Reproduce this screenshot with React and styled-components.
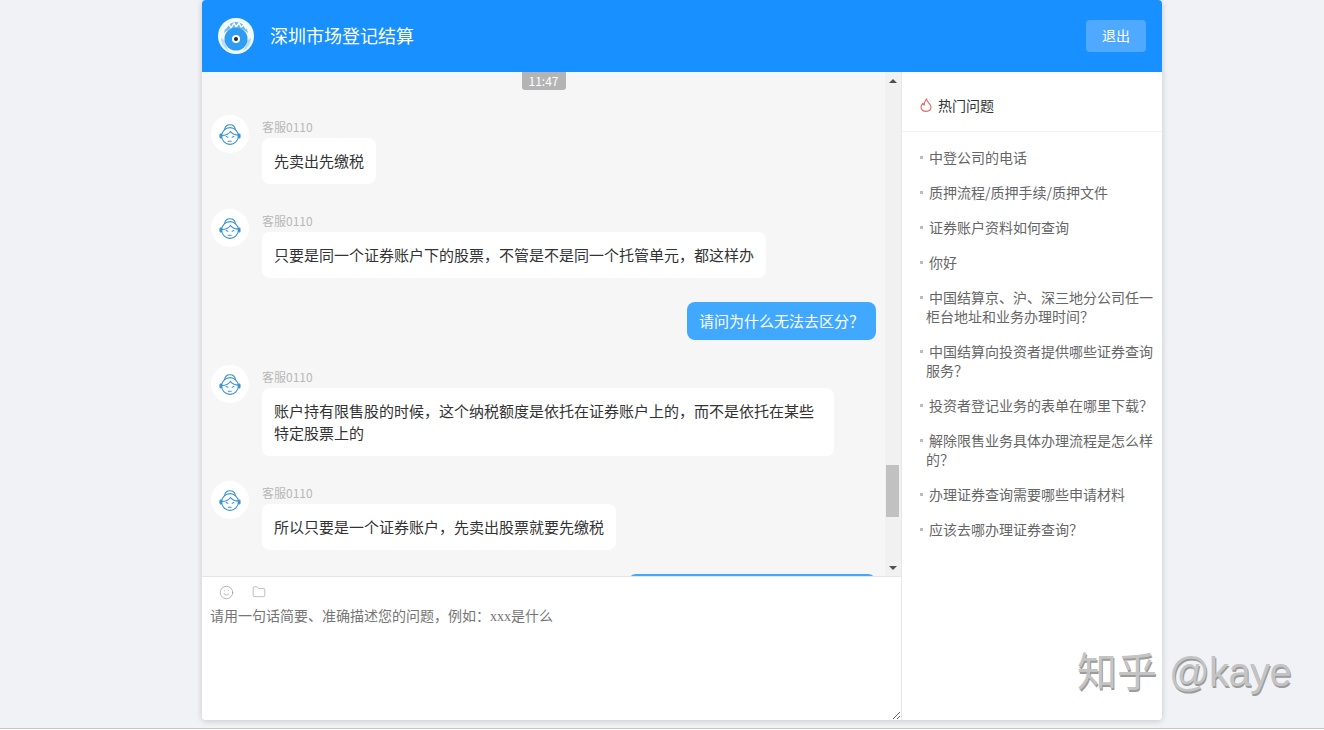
import React from 'react';
import styled, { createGlobalStyle } from 'styled-components';
import { Smile, Folder } from 'lucide-react';

const FONT = `"Noto Sans CJK SC", "Noto Sans", sans-serif`;

const Global = createGlobalStyle`
  html, body { margin: 0; padding: 0; height: 730px; overflow: hidden; background: #fff; }
  * { box-sizing: border-box; }
  body { font-family: ${FONT}; }
`;
const Page = styled.div`
  position: relative; height: 729px; background: #f0f2f5; border-bottom: 1px solid #c8c8c8;
  padding-left: 202px; overflow: hidden;
`;
const Card = styled.div`
  width: 960px; height: 720px; background: #fff; border-radius: 4px;
  box-shadow: 0 1px 6px rgba(0,0,0,.18);
  display: flex; flex-direction: column; overflow: hidden;
`;
const Header = styled.header`
  height: 72px; flex: none; background: #1890ff; display: flex; align-items: center;
  padding: 0 16px;
`;
const Title = styled.h1`
  margin: 0 0 2px 16px; font-size: 18px; font-weight: 400; color: #fff; flex: 1; line-height: 24px;
`;
const Logout = styled.button`
  width: 60px; height: 32px; border: 0; border-radius: 4px; background: #4fa9ff;
  color: #fff; font: 400 14px/30px ${FONT}; padding: 0 0 2px;
`;
const Body = styled.div`display: flex; flex: 1; min-height: 0;`;
const Left = styled.section`
  width: 700px; flex: none; display: flex; flex-direction: column; border-right: 1px solid #e8e8e8;
`;
const ChatPane = styled.div`
  height: 504px; flex: none; display: flex; background: #f6f6f6;
`;
const Messages = styled.div`
  flex: 1; min-width: 0; overflow: hidden; display: flex; flex-direction: column;
  gap: 25px; padding: 0 9px;
  & > * { flex-shrink: 0; }
`;
const Time = styled.div`
  align-self: center; width: 44px; height: 18px; background: #b4b4b4; color: #fff;
  font-size: 12px; line-height: 18px; text-align: center; border-radius: 0 0 3px 3px;
`;
const Row = styled.div`display: flex; align-items: flex-start; gap: 13px;`;
const RowRight = styled.div`display: flex; justify-content: flex-end; margin-top: -1px;`;
const AvatarCircle = styled.div`
  width: 38px; height: 38px; border-radius: 50%; background: #fff; flex: none;
  display: flex; align-items: center; justify-content: center;
`;
const MsgCol = styled.div`display: flex; flex-direction: column; align-items: flex-start; padding-top: 3px;`;
const Name = styled.div`
  font-size: 12px; line-height: 18px; color: #b8b8b8; margin-bottom: 2px;
`;
const Bubble = styled.div`
  max-width: 572px; background: #fff; border-radius: 8px; padding: 12px;
  font-size: 15px; line-height: 22px; color: #333;
`;
const SelfBubble = styled.div`
  min-width: ${p => p.$minWidth || 0}px; min-height: 38px;
  background: #40a9ff; border-radius: 8px; padding: 8px 12px;
  font-size: 15px; line-height: 22px; color: #fff;
`;
const Track = styled.div`
  width: 16px; flex: none; background: #f1f1f1; display: flex; flex-direction: column; align-items: flex-start;
`;
const ArrowBtn = styled.div`
  width: 15px; height: 17px; flex: none; display: flex; align-items: center; justify-content: center;
  &::after {
    content: ''; width: 0; height: 0;
    border-left: 4px solid transparent; border-right: 4px solid transparent;
    ${p => p.$down ? 'border-top: 4px solid #505050;' : 'border-bottom: 4px solid #505050;'}
  }
`;
const Thumb = styled.div`
  width: 13px; height: 52px; flex: none; background: #c1c1c1; margin: auto 0 42px 1px;
`;
const Composer = styled.div`
  flex: 1; min-height: 0; display: flex; flex-direction: column; border-top: 1px solid #e6e6e6; background: #fff;
`;
const Tools = styled.div`
  height: 28px; flex: none; display: flex; align-items: center; gap: 18px; padding: 2px 0 0 17px; color: #8f8f8f;
`;
const Input = styled.textarea`
  flex: 1; width: 100%; border: 0; outline: 0; padding: 1px 8px; margin: 0; display: block;
  font: 400 14px/22px "Liberation Serif", "Noto Sans CJK SC", serif; color: #333; background: #fff;
  &::placeholder { color: #757575; opacity: 1; }
`;
const Side = styled.aside`flex: 1; min-width: 0; background: #fff;`;
const SideHead = styled.div`
  height: 60px; display: flex; align-items: center; gap: 6px; padding: 6px 0 0 18px;
  border-bottom: 1px solid #f2f2f2; font-size: 14px; color: #333; line-height: 20px;
`;
const List = styled.ul`
  list-style: none; margin: 0; padding: 16px 6px 0 24px; display: flex; flex-direction: column; gap: 16px;
`;
const Item = styled.li`
  position: relative; font-size: 14px; line-height: 19px; color: #666; text-indent: 3px;
  &::before {
    content: ''; position: absolute; left: -6px; top: 8px; width: 3px; height: 3px; background: #bbb;
  }
`;
const Watermark = styled.div`
  position: absolute; left: 1077px; top: 645px; white-space: nowrap;
  font-size: 40px; line-height: 54px; color: #c4c4c4; text-shadow: 1px 2px 0 #9c9c9c;
  display: flex; gap: 12px;
  font-family: "Liberation Sans", "Noto Sans CJK SC", sans-serif;
`;
const Handle = styled.span`
  letter-spacing: -0.6px;
`;

const Logo = () => (
  <svg width="36" height="36" viewBox="0 0 36 36">
    <circle cx="18" cy="18" r="18" fill="#f2fafe" />
    <path d="M6 15C7 9 12 4 18 4s11 5 12 11c-3-3-7-5-12-5s-9 2-12 5z" fill="#6dbaee" />
    <path d="M7 11l4-5 2 4 3-5 2 4 3-4 2 4 3-2 2 4" fill="none" stroke="#fff" strokeWidth="1.3" strokeLinejoin="round" />
    <path d="M3 20c0 6 4 11 8 13-2-3-3-6-3-10zM33 20c0 6-4 11-8 13 2-3 3-6 3-10z" fill="#b4dcf5" />
    <circle cx="18" cy="21" r="11.500" fill="#2f9cf3" />
    <circle cx="18" cy="21" r="4" fill="#fff" />
    <circle cx="18" cy="21" r="2" fill="#1c2733" />
  </svg>
);

const FlameIcon = () => (
  <svg width="12" height="14" viewBox="0 0 12 14" fill="none" stroke="#e0655f" strokeWidth="1.1" strokeLinejoin="round">
    <path d="M6.5.8c.2 2.2 1.3 3.2 2.6 4.6 1 1.1 1.9 2.2 1.9 3.7 0 2.6-2.2 4.3-5 4.3s-5-1.7-5-4.3c0-1.7 1-3 2-4 .1 1 .5 1.6 1.1 2C4.200 5.400 4.700 2.800 6.500.800z" />
  </svg>
);

const Agent = () => (
  <svg width="24" height="26" viewBox="0 0 24 26" fill="none" stroke="#3a93cc" strokeWidth="1.1" strokeLinecap="round">
    <circle cx="12" cy="15" r="8.4" />
    <path d="M6.500 8.800C7 5.500 9.500 3.800 12 3.800s5 1.700 5.500 5" />
    <path d="M4 14.500c3.500 0 6.500-1.300 8.500-4 1.300 2 3.500 3.300 7.500 3.600" />
    <path d="M8.200 15.600l1.700.6M14.200 16.200l1.700-.6" />
    <path d="M10.200 20.300h3" />
    <rect x="2" y="13" width="1.6" height="4" rx=".8" fill="#3a93cc" />
    <rect x="20.400" y="13" width="1.6" height="4" rx=".8" fill="#3a93cc" />
  </svg>
);

const AgentRow = ({ children }) => (
  <Row>
    <AvatarCircle><Agent /></AvatarCircle>
    <MsgCol>
      <Name>客服0110</Name>
      <Bubble>{children}</Bubble>
    </MsgCol>
  </Row>
);

const questions = [
  '中登公司的电话',
  '质押流程/质押手续/质押文件',
  '证券账户资料如何查询',
  '你好',
  '中国结算京、沪、深三地分公司任一柜台地址和业务办理时间？',
  '中国结算向投资者提供哪些证券查询服务？',
  '投资者登记业务的表单在哪里下载？',
  '解除限售业务具体办理流程是怎么样的？',
  '办理证券查询需要哪些申请材料',
  '应该去哪办理证券查询？',
];

export default function App() {
  return (
    <>
      <Global />
      <Page>
        <Card>
          <Header>
            <Logo />
            <Title>深圳市场登记结算</Title>
            <Logout>退出</Logout>
          </Header>
          <Body>
            <Left>
              <ChatPane>
                <Messages>
                  <Time>11:47</Time>
                  <AgentRow>先卖出先缴税</AgentRow>
                  <AgentRow>只要是同一个证券账户下的股票，不管是不是同一个托管单元，都这样办</AgentRow>
                  <RowRight><SelfBubble>请问为什么无法去区分？</SelfBubble></RowRight>
                  <AgentRow>账户持有限售股的时候，这个纳税额度是依托在证券账户上的，而不是依托在某些特定股票上的</AgentRow>
                  <AgentRow>所以只要是一个证券账户，先卖出股票就要先缴税</AgentRow>
                  <RowRight><SelfBubble $minWidth={248} /></RowRight>
                </Messages>
                <Track>
                  <ArrowBtn />
                  <Thumb />
                  <ArrowBtn $down />
                </Track>
              </ChatPane>
              <Composer>
                <Tools>
                  <Smile size={15} strokeWidth={1} />
                  <Folder size={14} strokeWidth={1} />
                </Tools>
                <Input placeholder="请用一句话简要、准确描述您的问题，例如：xxx是什么" />
              </Composer>
            </Left>
            <Side>
              <SideHead>
                <FlameIcon />
                热门问题
              </SideHead>
              <List>
                {questions.map(q => <Item key={q}>{q}</Item>)}
              </List>
            </Side>
          </Body>
        </Card>
        <Watermark><span>知乎</span><Handle>@kaye</Handle></Watermark>
      </Page>
    </>
  );
}
